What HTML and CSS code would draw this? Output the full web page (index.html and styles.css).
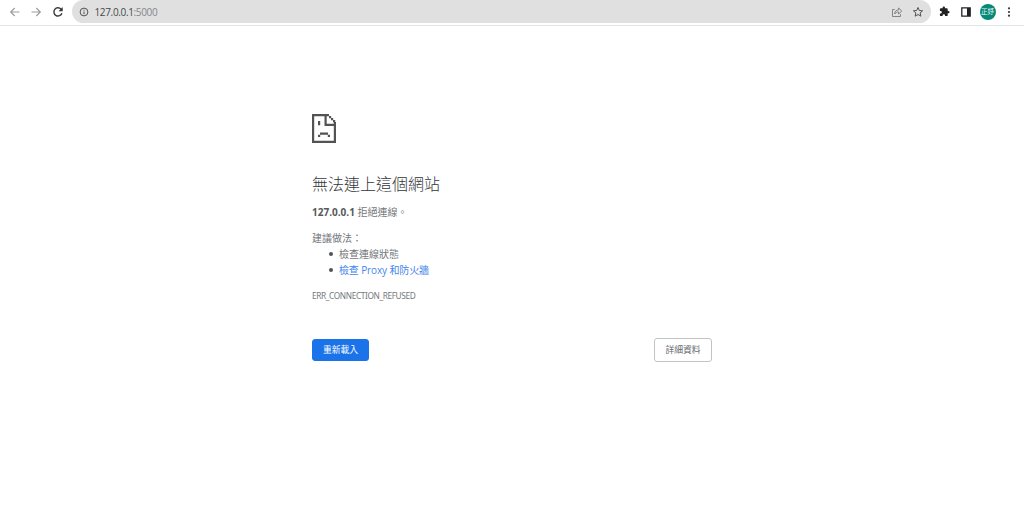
FILE: index.html
```html
<!DOCTYPE html>
<html lang="zh-Hant">
<head>
<meta charset="utf-8">
<title>127.0.0.1</title>
<link rel="stylesheet" href="styles.css">
</head>
<body>
<header class="toolbar">
  <svg class="nav-icon dim" viewBox="0 0 12 12"><path d="M10.500 6H1.800M5.700 2 1.700 6l4 4"/></svg>
  <svg class="nav-icon dim" viewBox="0 0 12 12"><path d="M1.500 6h8.700M6.300 2l4 4-4 4"/></svg>
  <svg class="nav-icon" viewBox="0 0 12 12"><path d="M9.900 7.200A4.100 4.100 0 1 1 9 3.100l1 1"/><path class="solid" d="M10.700 1v4.200H6.500z"/></svg>
  <div class="address">
    <svg class="info" viewBox="0 0 10 10"><circle cx="5" cy="5" r="3.900"/><path d="M5 4.500v2.700M5 2.700v1"/></svg>
    <span class="url">127.0.0.1<span class="port">:5000</span></span>
    <svg class="share" viewBox="0 0 12 12"><path d="M3.700 3.500H1.500v7h8V8.200M3.600 8c.2-2.800 1.700-4 4-4V2l3.200 3-3.200 3V6c-1.800 0-3 .5-4 2z"/></svg>
    <svg class="star" viewBox="0 0 12 12"><path d="m6 1.500 1.300 3 3.300.3-2.500 2.100.8 3.300L6 8.500l-2.900 1.700.8-3.300-2.500-2.100 3.300-.3z"/></svg>
  </div>
  <svg class="puzzle" viewBox="0 0 24 24"><path d="M20.500 11H19V7a2 2 0 0 0-2-2h-4V3.500a2.500 2.500 0 0 0-5 0V5H4a2 2 0 0 0-2 2v3.800h1.500a2.700 2.700 0 0 1 0 5.400H2V20c0 1.100.9 2 2 2h3.800v-1.500a2.700 2.700 0 0 1 5.400 0V22H17a2 2 0 0 0 2-2v-4h1.500a2.500 2.500 0 0 0 0-5z"/></svg>
  <svg class="panel" viewBox="0 0 10 10"><path class="frame" d="M.8.8h8.400v8.400H.8z"/><path d="M6 1h3v8H6z"/></svg>
  <span class="avatar">正妤</span>
  <svg class="more" viewBox="0 0 4 12"><circle cx="2" cy="2.300" r="1.100"/><circle cx="2" cy="6" r="1.100"/><circle cx="2" cy="9.700" r="1.100"/></svg>
</header>
<main class="error">
  <svg class="sad" viewBox="0 0 24 29"><path d="M0 0h17v2.200H2.200v24.600h19.600V12H12.500V2h2.200v7.800h7.100V8H24v21H0zM17 2h2.200v2.200H17zM19 4h2.200v2.200H19zM21 6h2.200v2.200H21zM6 7h2.200v4.200H6zM8 18.500h8v2.300H8zM6 20.700h2.200V23H6zM15.800 20.700H18V23h-2.200z"/></svg>
  <h1 class="title">無法連上這個網站</h1>
  <p class="summary"><strong>127.0.0.1</strong> 拒絕連線。</p>
  <p class="hint">建議做法：</p>
  <ul class="tips">
    <li>檢查連線狀態</li>
    <li><a class="link">檢查 Proxy 和防火牆</a></li>
  </ul>
  <p class="code">ERR_CONNECTION_REFUSED</p>
  <div class="actions">
    <button class="btn primary">重新載入</button>
    <button class="btn">詳細資料</button>
  </div>
</main>
</body>
</html>
```

FILE: styles.css
```css
* { box-sizing: border-box; }
body {
  margin: 0;
  background: #fff;
  color: #74777b;
  font: 10px/16px "Open Sans", "Noto Sans CJK TC", sans-serif;
}
svg { display: block; flex: none; }
.toolbar {
  display: flex;
  align-items: center;
  height: 26px;
  padding: 0 9px 2px 8.5px;
  border-bottom: 1px solid #e4e5e6;
}
.nav-icon {
  width: 12px;
  height: 12px;
  margin-right: 9.5px;
  fill: none;
  stroke: #35383b;
  stroke-width: 1.4;
}
.nav-icon.dim { stroke: #9b9d9f; stroke-width: 1.2; }
.nav-icon .solid { fill: #35383b; stroke: none; }
.address {
  display: flex;
  align-items: center;
  width: 859px;
  height: 23px;
  margin-left: -1.5px;
  padding: 0 6.5px 0 7px;
  border-radius: 12px;
  background: #e0e0e0;
}
.info { width: 10px; height: 10px; fill: none; stroke: #505356; stroke-width: 1; }
.url { margin-left: 6px; color: #45484c; letter-spacing: -.35px; }
.port { color: #85878a; }
.share { width: 12px; height: 12px; margin-left: auto; fill: none; stroke: #77797c; stroke-width: .9; }
.star { width: 12px; height: 12px; margin-left: 9px; fill: none; stroke: #505356; stroke-width: 1; }
.puzzle { width: 11px; height: 11px; margin-left: 8.5px; fill: #202226; }
.panel { width: 10px; height: 10px; margin-left: 11px; fill: #202226; }
.frame { fill: none; stroke: #202226; stroke-width: 1.3; }
.avatar {
  width: 16px;
  height: 16px;
  margin-left: 8.5px;
  border-radius: 50%;
  background: #078978;
  color: #e8f6f3;
  font-size: 6.5px;
  line-height: 16px;
  text-align: center;
  white-space: nowrap;
}
.more { width: 4px; height: 12px; margin-left: 11px; fill: #35383b; }
.error { width: 400px; margin: 88px auto 0; }
.sad { width: 24px; height: 29px; fill: #535353; }
.title {
  margin: 31px 0 0;
  color: #33363a;
  font-size: 16px;
  font-weight: 300;
  line-height: 20px;
}
.summary { margin: 10px 0 0; }
.summary strong { color: #55585c; }
.hint { margin: 10px 0 0; }
.tips { margin: 0; padding-left: 17px; list-style: none; }
.tips li { display: flex; align-items: center; }
.tips li::before {
  content: "";
  width: 4px;
  height: 4px;
  margin-right: 6px;
  border-radius: 50%;
  background: #505357;
}
.link { color: #4686ee; letter-spacing: -.13px; }
.code { margin: 10px 0 0; font: 8.3px/16px "Noto Sans", sans-serif; letter-spacing: -.39px; }
.actions { display: flex; justify-content: space-between; margin-top: 34px; }
.btn {
  width: 58px;
  height: 24px;
  padding: 0;
  border: 1px solid #c1c3c6;
  border-radius: 3px;
  background: #fff;
  color: #65686c;
  font: 8.8px/22px "Noto Sans CJK TC", sans-serif;
}
.btn.primary {
  width: 57px;
  height: 22px;
  margin-top: 1px;
  border-color: #1a73e8;
  background: #1a73e8;
  color: #fff;
  line-height: 20px;
}
```
